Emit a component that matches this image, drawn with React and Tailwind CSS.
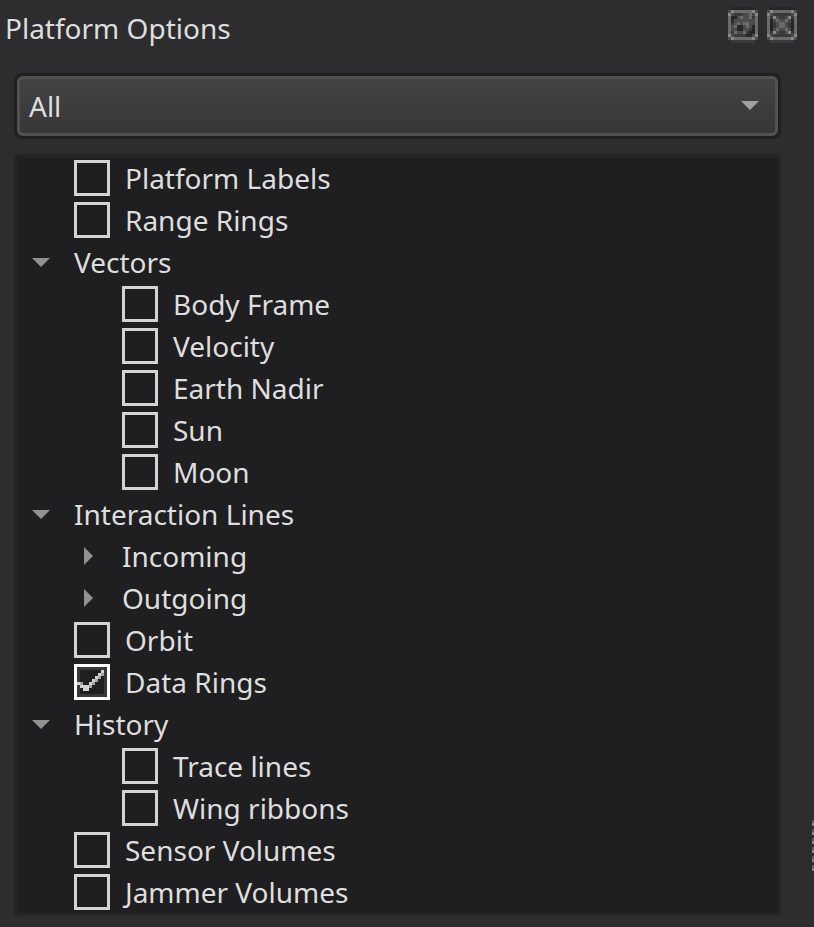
import React from "react";

const ICON_COLORS = { a: "#8b8784", b: "#6b6b69", c: "#4c4c4c", d: "#252628", e: "#393a3b" };

function PixelIcon({ rows }) {
  return (
    <svg viewBox={`0 0 ${rows[0].length} ${rows.length}`} className="h-9 w-9" shapeRendering="crispEdges" aria-hidden="true">
      {rows.flatMap((row, y) =>
        [...row].map((c, x) =>
          ICON_COLORS[c] ? <rect key={`${x}-${y}`} x={x} y={y} width="1" height="1" fill={ICON_COLORS[c]} /> : null
        )
      )}
    </svg>
  );
}

const FLOAT_ROWS = [
  "..dddddddd..",
  ".cabbbbbbac.",
  ".aceeeccbca.",
  ".bddcbccbeb.",
  ".bdcccccccb.",
  ".becbcbbccb.",
  ".bcbddcbcdb.",
  ".bccddccedb.",
  ".bebccbeddb.",
  ".aceeeeddca.",
  ".cabbbbbbac.",
  "..eeeeeeee..",
];

const CLOSE_ROWS = [
  "..dddddddd..",
  ".cabbbbbbac.",
  ".aceeeeeeca.",
  ".beaceecaeb.",
  ".bdcbccbcdb.",
  ".bdecbbcedb.",
  ".bdecbbcedb.",
  ".bdcbccbcdb.",
  ".beaceecaeb.",
  ".aceeeeeeca.",
  ".cabbbbbbac.",
  "..eeeeeeee..",
];

const TREE = [
  { label: "Platform Labels", check: true },
  { label: "Range Rings", check: true },
  { label: "Vectors", open: true },
  { label: "Body Frame", check: true, child: true },
  { label: "Velocity", check: true, child: true },
  { label: "Earth Nadir", check: true, child: true },
  { label: "Sun", check: true, child: true },
  { label: "Moon", check: true, child: true },
  { label: "Interaction Lines", open: true },
  { label: "Incoming", child: true },
  { label: "Outgoing", child: true },
  { label: "Orbit", check: true },
  { label: "Data Rings", check: true, checked: true },
  { label: "History", open: true },
  { label: "Trace lines", check: true, child: true },
  { label: "Wing ribbons", check: true, child: true },
  { label: "Sensor Volumes", check: true },
  { label: "Jammer Volumes", check: true },
];

function CheckRow({ item }) {
  return (
    <label className={`flex h-[42px] items-center gap-[15px] ${item.child ? "pl-[105px]" : "pl-[57px]"}`}>
      <span className="relative flex h-9 w-9 shrink-0">
        <input
          type="checkbox"
          defaultChecked={item.checked}
          className="peer h-9 w-9 appearance-none border-[3px] border-[#d4d4d4] checked:border-white checked:bg-[#202022]"
        />
        <svg viewBox="0 0 12 12" className="pointer-events-none absolute inset-0 hidden h-9 w-9 peer-checked:block" shapeRendering="crispEdges" aria-hidden="true">
          <path d="M1.5 1.5H10.5V10.5H1.5Z" fill="none" stroke="#38383a" />
          <path d="M9 2h1v1H9zM8 3h1v1H8zM7 4h1v1H7zM6 5h1v1H6zM5 6h1v1H5zM1 6h1v1H1zM2 7h3v1H2zM3 8h2v1H3z" fill="#d2d2d2" />
          <path d="M9 3h1v1H9zM8 4h1v1H8zM7 5h1v1H7zM6 6h1v1H6zM5 7h1v1H5zM2 6h1v1H2z" fill="#a5a5a5" />
        </svg>
      </span>
      <span>{item.label}</span>
    </label>
  );
}

function BranchRow({ item }) {
  return (
    <button
      type="button"
      aria-expanded={!!item.open}
      className={`flex h-[42px] w-full items-center text-left ${item.child ? "pl-[63px]" : "pl-[15px]"}`}
    >
      <span className="flex w-[42px] shrink-0">
        {item.open ? (
          <svg viewBox="0 0 18 9" className="h-[9px] w-[18px]" aria-hidden="true">
            <path d="M0 0H18L9 9Z" fill="#929292" />
          </svg>
        ) : (
          <svg viewBox="0 0 18 18" className="h-[18px] w-[18px]" aria-hidden="true">
            <path d="M4 0V18L13 9Z" fill="#929292" />
          </svg>
        )}
      </span>
      <span>{item.label}</span>
    </button>
  );
}

export default function App() {
  return (
    <main className="flex min-h-screen bg-[#2d2d2f] font-['Noto_Sans','Open_Sans',sans-serif] text-[28px] leading-[42px] text-[#dedede]">
      <section className="min-w-0 flex-1">
        <header className="flex h-[73px] items-start justify-between pt-[7px] pl-[5px]">
          <h1>Platform Options</h1>
          <div className="flex gap-[3px] pr-3">
            <button type="button" aria-label="Float panel"><PixelIcon rows={FLOAT_ROWS} /></button>
            <button type="button" aria-label="Close panel"><PixelIcon rows={CLOSE_ROWS} /></button>
          </div>
        </header>
        <div className="pr-[31px] pl-[14px]">
          <div className="relative rounded-lg bg-[#202021] p-[3px]">
            <select
              aria-label="Platform filter"
              className="block h-[60px] w-full appearance-none rounded-md border-[3px] border-[#515151] bg-linear-to-b from-[#434344] to-[#373738] pl-[9px]"
            >
              <option>All</option>
            </select>
            <svg viewBox="0 0 18 9" className="pointer-events-none absolute top-[28px] right-[22px] h-[9px] w-[18px]" aria-hidden="true">
              <path d="M0 0H18L9 9Z" fill="#a0a0a1" />
            </svg>
          </div>
          <ul className="mt-[15px] border-[3px] border-[#252527] bg-[#1f1f21]">
            {TREE.map((item) => (
              <li key={item.label}>{item.check ? <CheckRow item={item} /> : <BranchRow item={item} />}</li>
            ))}
          </ul>
        </div>
      </section>
      <div className="flex w-[2px] flex-col justify-end gap-[3px] pb-14" aria-hidden="true">
        {[0, 1, 2, 3, 4, 5].map((i) => (
          <span key={i} className="h-[6px] border-t-[3px] border-[#5c5c5d] bg-[#858585]" />
        ))}
      </div>
    </main>
  );
}
